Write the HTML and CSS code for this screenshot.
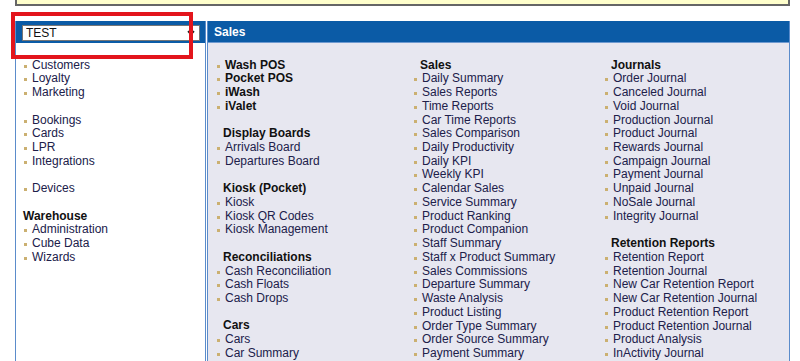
FILE: index.html
```html
<!DOCTYPE html>
<html lang="en">
<head>
  <meta charset="UTF-8">
  <meta name="viewport" content="width=device-width, initial-scale=1.0">
  <title>Reports</title>
  <link rel="stylesheet" href="styles.css">
</head>
<body>
  <div class="notice"></div>

  <div class="layout">
    <div class="panel side">
      <div class="panel-head">
        <div class="site-select">
          <select>
            <option>TEST</option>
          </select>
          <svg class="chevron" width="8" height="6" viewBox="0 0 8 6">
            <path d="M1 1.2 L4 4.4 L7 1.2" fill="none" stroke="#222" stroke-width="1.7"/>
          </svg>
        </div>
      </div>
      <div class="panel-body">
        <a class="item" href="#">Customers</a>
        <a class="item" href="#">Loyalty</a>
        <a class="item" href="#">Marketing</a>
        <div class="blank"></div>
        <a class="item" href="#">Bookings</a>
        <a class="item" href="#">Cards</a>
        <a class="item" href="#">LPR</a>
        <a class="item" href="#">Integrations</a>
        <div class="blank"></div>
        <a class="item" href="#">Devices</a>
        <div class="blank"></div>
        <div class="heading">Warehouse</div>
        <a class="item" href="#">Administration</a>
        <a class="item" href="#">Cube Data</a>
        <a class="item" href="#">Wizards</a>
      </div>
    </div>

    <div class="panel main">
      <div class="panel-head title">Sales</div>
      <div class="panel-body columns">
        <div class="col">
          <a class="item strong" href="#">Wash POS</a>
          <a class="item strong" href="#">Pocket POS</a>
          <a class="item strong" href="#">iWash</a>
          <a class="item strong" href="#">iValet</a>
          <div class="blank"></div>
          <div class="heading">Display Boards</div>
          <a class="item" href="#">Arrivals Board</a>
          <a class="item" href="#">Departures Board</a>
          <div class="blank"></div>
          <div class="heading">Kiosk (Pocket)</div>
          <a class="item" href="#">Kiosk</a>
          <a class="item" href="#">Kiosk QR Codes</a>
          <a class="item" href="#">Kiosk Management</a>
          <div class="blank"></div>
          <div class="heading">Reconciliations</div>
          <a class="item" href="#">Cash Reconciliation</a>
          <a class="item" href="#">Cash Floats</a>
          <a class="item" href="#">Cash Drops</a>
          <div class="blank"></div>
          <div class="heading">Cars</div>
          <a class="item" href="#">Cars</a>
          <a class="item" href="#">Car Summary</a>
        </div>

        <div class="col">
          <div class="heading">Sales</div>
          <a class="item" href="#">Daily Summary</a>
          <a class="item" href="#">Sales Reports</a>
          <a class="item" href="#">Time Reports</a>
          <a class="item" href="#">Car Time Reports</a>
          <a class="item" href="#">Sales Comparison</a>
          <a class="item" href="#">Daily Productivity</a>
          <a class="item" href="#">Daily KPI</a>
          <a class="item" href="#">Weekly KPI</a>
          <a class="item" href="#">Calendar Sales</a>
          <a class="item" href="#">Service Summary</a>
          <a class="item" href="#">Product Ranking</a>
          <a class="item" href="#">Product Companion</a>
          <a class="item" href="#">Staff Summary</a>
          <a class="item" href="#">Staff x Product Summary</a>
          <a class="item" href="#">Sales Commissions</a>
          <a class="item" href="#">Departure Summary</a>
          <a class="item" href="#">Waste Analysis</a>
          <a class="item" href="#">Product Listing</a>
          <a class="item" href="#">Order Type Summary</a>
          <a class="item" href="#">Order Source Summary</a>
          <a class="item" href="#">Payment Summary</a>
        </div>

        <div class="col">
          <div class="heading">Journals</div>
          <a class="item" href="#">Order Journal</a>
          <a class="item" href="#">Canceled Journal</a>
          <a class="item" href="#">Void Journal</a>
          <a class="item" href="#">Production Journal</a>
          <a class="item" href="#">Product Journal</a>
          <a class="item" href="#">Rewards Journal</a>
          <a class="item" href="#">Campaign Journal</a>
          <a class="item" href="#">Payment Journal</a>
          <a class="item" href="#">Unpaid Journal</a>
          <a class="item" href="#">NoSale Journal</a>
          <a class="item" href="#">Integrity Journal</a>
          <div class="blank"></div>
          <div class="heading">Retention Reports</div>
          <a class="item" href="#">Retention Report</a>
          <a class="item" href="#">Retention Journal</a>
          <a class="item" href="#">New Car Retention Report</a>
          <a class="item" href="#">New Car Retention Journal</a>
          <a class="item" href="#">Product Retention Report</a>
          <a class="item" href="#">Product Retention Journal</a>
          <a class="item" href="#">Product Analysis</a>
          <a class="item" href="#">InActivity Journal</a>
        </div>
      </div>
    </div>
  </div>

  <!-- annotation box round the site picker -->
  <div class="highlight"></div>
</body>
</html>
```

FILE: styles.css
```css
html, body {
  height: 100%;
  margin: 0;
  padding: 0;
  overflow: hidden;
  font-family: 'Liberation Sans', Arial, sans-serif;
  font-size: 12px;
  background: #fff;
}

body {
  position: relative;
}

.notice {
  margin: 0 10px 0 15px;
  height: 4px;
  background-color: #ffffcc;
  border: 2px solid #666;
  border-top: none;
}

.layout {
  display: flex;
  gap: 1px;
  margin: 15px 10px 0 15px;
  height: calc(100vh - 21px);
}

.panel {
  display: flex;
  flex-direction: column;
  border-left: 1px solid #5b8ccb;
  border-right: 1px solid #5b8ccb;
  overflow: hidden;
}

.side {
  width: 191px;
  box-sizing: border-box;
  background: #fff;
}

.main {
  flex: 1;
  background: #e7e7f0;
}

.panel-head {
  flex: none;
  height: 22px;
  background-color: #0b5ba6;
  box-sizing: border-box;
}

.side .panel-head {
  padding: 4px 0 0 7px;
  margin-left: -1px;
}

.title {
  color: #fff;
  font-weight: bold;
  line-height: 22px;
  padding-left: 6px;
}

.site-select {
  position: relative;
  width: 178px;
}

.site-select select {
  display: block;
  width: 100%;
  height: 16px;
  margin: 0;
  padding: 0 0 0 3px;
  border: 1px solid #767676;
  border-radius: 0;
  background: #fff;
  color: #111;
  font-family: inherit;
  font-size: 12px;
  -webkit-appearance: none;
  appearance: none;
}

.chevron {
  position: absolute;
  top: 5px;
  right: 5px;
  pointer-events: none;
}

.panel-body {
  flex: 1;
  min-height: 0;
  padding-top: 15.6px;
  line-height: 13.73px;
  border-top: 1px solid #6f9ad0;
  margin-top: -1px;
}

.side .panel-body {
  padding-left: 8px;
  border-top: none;
  margin-top: 0;
}

.columns {
  display: grid;
  grid-template-columns: 197px 191px auto;
  align-content: start;
  padding-left: 9px;
}

.item {
  display: block;
  color: #20204a;
  text-decoration: none;
  white-space: nowrap;
}

.item::before {
  content: "";
  display: inline-block;
  width: 3px;
  height: 3px;
  margin-right: 5px;
  vertical-align: 1px;
  background-color: #cbb071;
}

.item.strong {
  font-weight: bold;
  color: #111;
}

.heading {
  font-weight: bold;
  color: #111;
  white-space: nowrap;
}

.columns .heading {
  padding-left: 6px;
}

.side .heading {
  margin-left: -1px;
}

.blank {
  height: 13.73px;
}

.highlight {
  position: absolute;
  left: 11px;
  top: 12px;
  width: 182px;
  height: 47px;
  box-sizing: border-box;
  border: 4px solid #e3151c;
}
```
